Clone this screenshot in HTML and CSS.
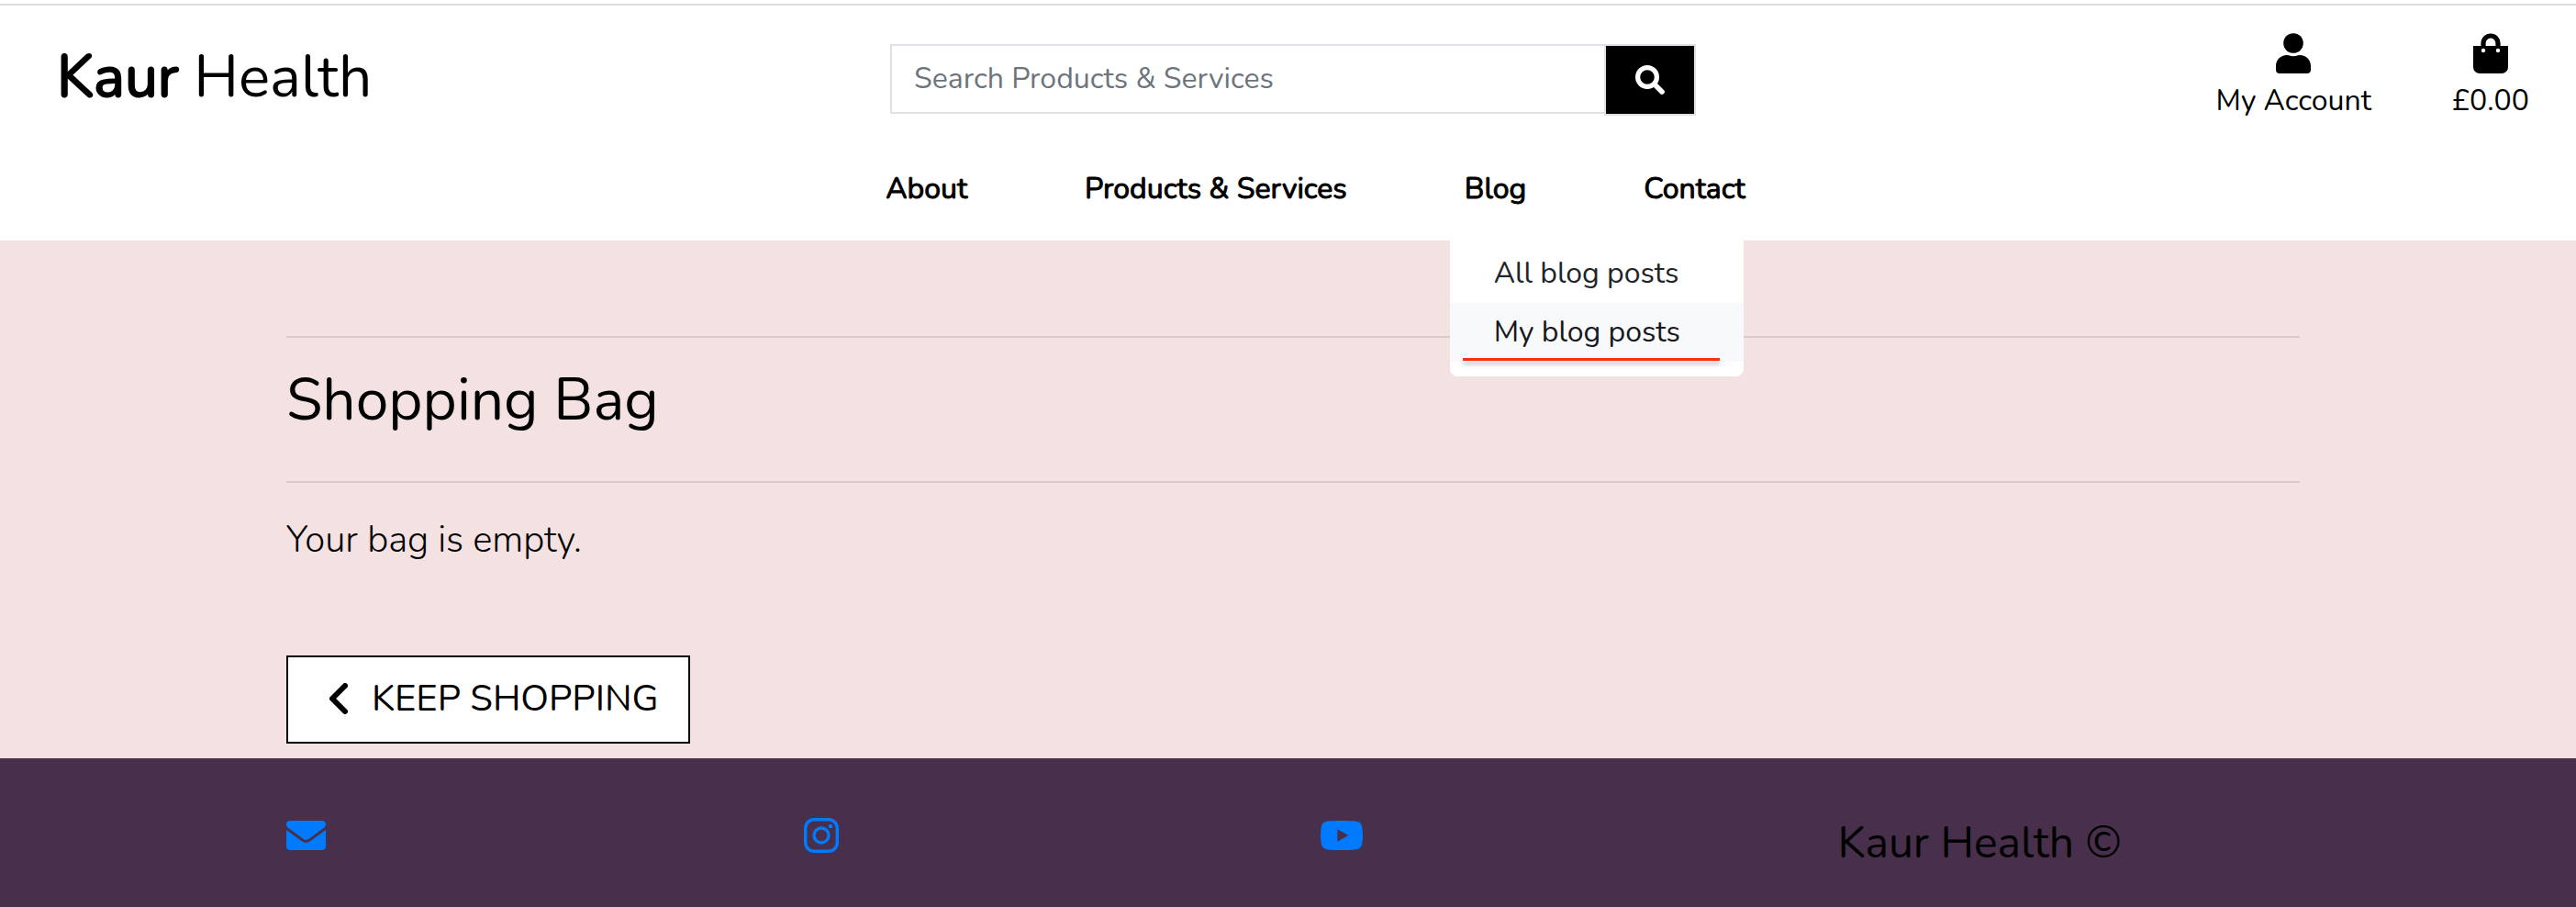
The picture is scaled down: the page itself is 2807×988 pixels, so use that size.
FILE: index.html
```html
<!DOCTYPE html>
<html lang="en">
<head>
<meta charset="utf-8">
<title>Kaur Health</title>
<link rel="stylesheet" href="styles.css">
</head>
<body>
<header class="header">
  <div class="topbar">
    <a class="logo" href="#"><strong>Kaur</strong> Health</a>
    <form class="search">
      <input class="search-input" type="text" placeholder="Search Products &amp; Services" aria-label="Search Products &amp; Services">
      <button class="search-button" type="submit" aria-label="Search">
        <svg width="32" height="32" viewBox="0 0 32 32"><circle cx="13" cy="13" r="10.4" fill="none" stroke="#fff" stroke-width="5.2"/><path d="M22 22l7 7" stroke="#fff" stroke-width="5.6" stroke-linecap="round"/></svg>
      </button>
    </form>
    <div class="tools">
      <a class="tool" href="#">
        <svg width="38" height="44" viewBox="0 0 38 44"><circle cx="19" cy="11" r="10.8"/><path d="M12 24c3 0 4 1.300 7 1.300S23 24 26 24c7 0 12 5 12 12v4c0 2.500-1.500 4-4 4H4c-2.500 0-4-1.500-4-4v-4c0-7 5-12 12-12z"/></svg>
        <span>My Account</span>
      </a>
      <a class="tool" href="#">
        <svg width="38" height="44" viewBox="0 0 38 44"><path d="M11 17v-6a8 8 0 0 1 16 0v6" fill="none" stroke="#000" stroke-width="5.200"/><path d="M0 14h38v23a7 7 0 0 1-7 7H7a7 7 0 0 1-7-7z"/><circle cx="11" cy="19" r="2.200" fill="#fff"/><circle cx="27" cy="19" r="2.200" fill="#fff"/></svg>
        <span>£0.00</span>
      </a>
    </div>
  </div>
  <nav class="nav">
    <a class="nav-link" href="#">About</a>
    <a class="nav-link" href="#">Products &amp; Services</a>
    <div class="nav-item">
      <a class="nav-link" href="#">Blog</a>
      <div class="menu">
        <a class="menu-item" href="#">All blog posts</a>
        <a class="menu-item menu-item-active" href="#">My blog posts</a>
      </div>
    </div>
    <a class="nav-link" href="#">Contact</a>
  </nav>
</header>
<main class="main">
  <h2 class="title">Shopping Bag</h2>
  <p class="message">Your bag is empty.</p>
  <a class="keep" href="#">
    <svg width="21" height="34" viewBox="0 0 21 34"><path d="M18 3L4 17l14 14" fill="none" stroke="#000" stroke-width="6" stroke-linecap="round" stroke-linejoin="round"/></svg>
    <span>KEEP SHOPPING</span>
  </a>
</main>
<footer class="footer">
  <a class="social" href="#" aria-label="Email"><svg width="43" height="32" viewBox="0 0 43 32"><path d="M4 0h35a4 4 0 0 1 4 4c0 1.600-.7 2.800-2 3.700L25 19.500c-2.500 1.900-4.500 1.900-7 0L2 7.700C.7 6.800 0 5.600 0 4a4 4 0 0 1 4-4z"/><path d="M0 10l16.500 12c3.500 2.500 6.500 2.500 10 0L43 10v18a4 4 0 0 1-4 4H4a4 4 0 0 1-4-4z"/></svg></a>
  <a class="social" href="#" aria-label="Instagram"><svg width="38" height="38" viewBox="0 0 38 38"><g fill="none" stroke="#007bff" stroke-width="3.400"><rect x="1.700" y="1.700" width="34.600" height="34.600" rx="9.500"/><circle cx="19" cy="19" r="8"/></g><circle cx="29" cy="9" r="2.300"/></svg></a>
  <a class="social" href="#" aria-label="YouTube"><svg width="46" height="32" viewBox="0 0 46 32"><path fill-rule="evenodd" d="M8 .6C16-.2 30-.2 38 .6c4.500.5 6.800 2.600 7.300 7 .9 6 .9 11 0 17-.5 4.300-2.800 6.300-7.300 6.800-8 .8-22 .8-30 0-4.500-.5-6.800-2.500-7.300-6.800-.9-6-.9-11 0-17C1.200 3.200 3.500 1.100 8 .6zM18.300 9.200v13.600L30.200 16z"/></svg></a>
  <p class="copyright">Kaur Health ©</p>
</footer>
</body>
</html>
```

FILE: styles.css
```css
* { box-sizing: border-box; }

body {
  margin: 0;
  min-height: 100vh;
  display: flex;
  flex-direction: column;
  background: #f4e1e1;
  color: #000;
  font-family: Nunito, Lato, sans-serif;
  font-size: 32px;
  line-height: 48px;
}

a { color: inherit; text-decoration: none; }
svg { display: block; fill: currentColor; }

.header {
  margin-top: 4px;
  border-top: 2px solid #dadce0;
  background: #fff;
  box-shadow: 0 -4px #fff;
}

.topbar {
  display: grid;
  grid-template-columns: 1fr 878px 1fr;
  align-items: start;
  padding: 30px 51px 0 62px;
}

.logo { padding-top: 8px; font-size: 64px; line-height: 80px; }
.logo strong { font-weight: 400; -webkit-text-stroke: 2px #000; }

.search { display: flex; margin-top: 12px; align-items: flex-start; }
.search-input {
  flex: 1;
  min-width: 0;
  height: 76px;
  padding: 0 24px 2px;
  border: 2px solid #dee2e6;
  border-right: 0;
  border-radius: 0;
  background: #fff;
  font: inherit;
}
.search-input::placeholder { color: #6c757d; opacity: 1; }
.search-button {
  display: flex;
  align-items: center;
  justify-content: center;
  width: 100px;
  height: 78px;
  padding: 0;
  border: 2px solid #dee2e6;
  background: #000;
}

.tools { display: flex; justify-content: flex-end; gap: 88px; }
.tool { display: flex; flex-direction: column; align-items: center; gap: 6px; }

.nav {
  display: flex;
  justify-content: center;
  gap: 128px;
  padding: 48px 0 32px 60px;
}
.nav-link { -webkit-text-stroke: 1px #000; }
.nav-item { position: relative; }
.menu {
  position: absolute;
  top: 76px;
  left: -16px;
  width: 320px;
  padding: 8px 0 16px;
  border-radius: 0 0 8px 8px;
  background: #fff;
  color: #212529;
}
.menu-item { display: block; padding: 8px 48px; white-space: nowrap; }
.menu-item-active { position: relative; background: #f8f9fa; color: #16181b; }
.menu-item-active::after {
  content: "";
  position: absolute;
  left: 14px;
  right: 26px;
  bottom: 1px;
  height: 3px;
  background: #ff2d0f;
  box-shadow: 0 4px 4px rgba(0, 0, 0, 0.25);
}

.main { flex: 1; padding: 104px 301px 16px 312px; }
.title {
  margin: 0 0 32px;
  padding: 30px 0 50px;
  border: 2px solid #dcc9c9;
  border-width: 2px 0;
  font-size: 64px;
  line-height: 76px;
  font-weight: 400;
}
.message { margin: 0 0 96px; font-size: 40px; line-height: 60px; font-weight: 300; }
.keep {
  display: inline-flex;
  align-items: center;
  gap: 26px;
  height: 96px;
  padding: 0 32px 2px 44px;
  border: 2px solid #000;
  background: #fff;
  font-size: 40px;
}

.footer {
  display: grid;
  grid-template-columns: repeat(4, 1fr);
  gap: 60px;
  align-items: start;
  padding: 64px 301px 42px 312px;
  background: #482f4b;
}
.social { display: flex; align-items: center; height: 40px; color: #007bff; }
.copyright { margin: 0; font-size: 48px; line-height: 56px; }
```
